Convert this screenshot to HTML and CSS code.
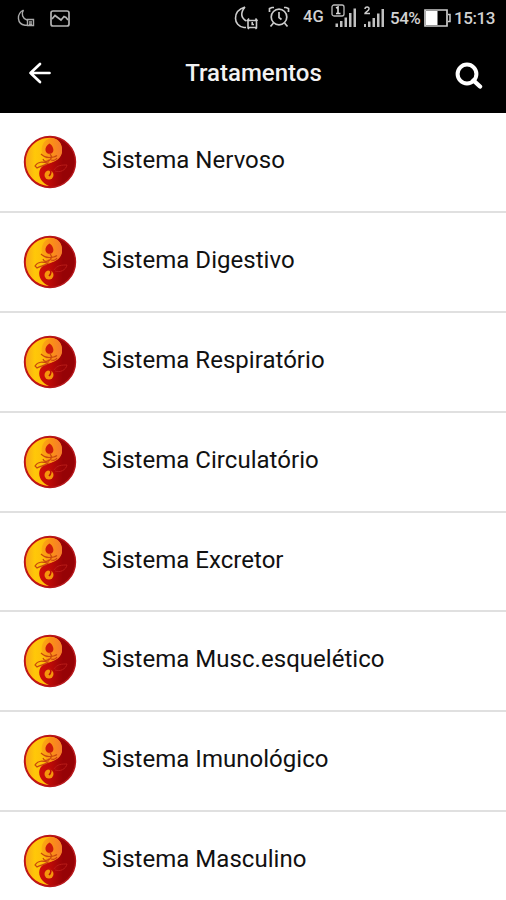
FILE: index.html
```html
<!DOCTYPE html>
<html lang="pt">
<head>
<meta charset="utf-8">
<title>Tratamentos</title>
<link rel="stylesheet" href="styles.css">
</head>
<body>
<svg class="defs" width="0" height="0" aria-hidden="true">
  <defs>
    <linearGradient id="gold" x1="0" x2="1"><stop offset="0" stop-color="#f8a51b"/><stop offset=".25" stop-color="#ffc808"/><stop offset="1" stop-color="#fbab10"/></linearGradient>
    <linearGradient id="orange" x1="0" x2="1"><stop offset="0" stop-color="#fbab10"/><stop offset=".5" stop-color="#fa9018"/><stop offset="1" stop-color="#f67a2c"/></linearGradient>
    <linearGradient id="red" x1="0" x2="1"><stop offset=".3" stop-color="#cf0f08"/><stop offset=".5" stop-color="#bd0a08"/><stop offset=".75" stop-color="#960306"/></linearGradient>
  </defs>
  <symbol id="emblem" viewBox="0 0 54 54">
    <circle cx="27" cy="27" r="25.5" fill="url(#red)" stroke="#b8161a" stroke-width="1.400"/>
    <path d="M27 2.800C13 2.800 2.800 14 2.800 27S13 50 26 51C19 48 15 42 16.500 36c1.500-5 6-7 11-8.500C34 25.500 39 22 39 15S34 2.800 27 2.800z" fill="url(#gold)"/>
    <path d="M28 3C18 5 16 17 22 23c3 3 1 5 0 7 7-3 17-4 17-15C39 8 35 3 28 3z" fill="url(#orange)"/>
    <path d="M26.500 8.500c-3 2-4.500 4.500-4 7 .5 2.500 2.500 3.500 4.500 3.300 3-.3 4-3 3-5.800-.5-2-1.500-3-3.500-4.500z" fill="#cc1a0a"/>
    <path d="M18 19c2 2 5 3.500 8 3.500s6-.5 8-2M27 19c3 3 1 5-2 7.500M20 24c1 3 4 3 6 1M28 25c3 1 5 0 6-2M12 31c3-5 8-4 13-3-3 3-8 3-11 5z" fill="none" stroke="#c9480e" stroke-width="1.200"/>
    <path d="M31 35c3-5 8-5 13-5-1 5-7 8-12 6" fill="none" stroke="#b81c18" stroke-width="1"/>
    <circle cx="26" cy="40" r="4.500" fill="#f5960c"/>
    <path d="M26 34c3 2 2 5 0 7" fill="none" stroke="#c01508" stroke-width="1.600"/>
  </symbol>
</svg>
<div class="status">
  <svg class="s-moon" width="18" height="18" viewBox="0 0 18 18" fill="none" stroke="#aaa" stroke-width="1.400"><path d="M6.500 1C-1 5 0 15 8 16.300h2M6.500 1C4 5 5.500 9.500 10 11"/><path d="M10.500 10.500h6v6h-6zM12 13h3M12 15h3"/></svg>
  <svg class="s-pic" width="20" height="17" viewBox="0 0 20 17" fill="none" stroke="#b4b4b4" stroke-width="1.700"><rect x="1" y="1" width="18" height="15" rx="2"/><path d="M2 9l3-3.500 4 3 2 1.500 3-3.500 2 1 2 2.500"/></svg>
  <svg class="s-moon2" width="24" height="24" viewBox="0 0 24 24" fill="none" stroke="#ccc" stroke-width="1.600"><path d="M11 1C-2 5-1 20 10 21.500h2M11 1C6 7 7 12 12.500 15"/><path d="M14 14.500h8.500v7H14zM13 15l2-2.500M21.500 12.500l2 2.500M18.200 16v2.500h1.800M15 21.500l-1 1.500M21.500 21.500l1 1.500"/></svg>
  <svg class="s-alarm" width="22" height="22" viewBox="0 0 22 22" fill="none" stroke="#ccc" stroke-width="1.700"><circle cx="11" cy="11" r="7.800"/><path d="M11 6v5.500l2.500 2M1.500 6V2.500L4 1.500h2M20.500 6V2.500L18 1.500h-2M5.500 17l-3 3.500M16.500 17l3 3.500"/></svg>
  <span class="net">4G</span>
  <svg class="s-sig1" width="26" height="24" viewBox="0 0 26 24"><path d="M4.500 19.500h2.500V23H4.500zM9 17h2.500v6H9zM13.500 13.500H16V23h-2.500zM18 9h2.500v14H18zM22.500 4.500H25V23h-2.500z" fill="#c0c0c0"/><rect x="1" y="1" width="12" height="11" rx="2" fill="#000" stroke="#bbb" stroke-width="1.300"/><path d="M5 4l2-1v6M5 9.500h4.500" fill="none" stroke="#ddd" stroke-width="1.600"/></svg>
  <svg class="s-sig2" width="21" height="22" viewBox="0 0 21 22"><path d="M0 18h2v3H0zM4 15.500h2.500V21H4zM8.500 12H11v9H8.500zM13 7.500h2.500V21H13zM17.500 3H20v18h-2.500z" fill="#c0c0c0"/><path d="M1 3c0-3 4.500-2.500 4 0C5 5 1 6 1 7.500h5" fill="none" stroke="#ccc" stroke-width="1.500"/></svg>
  <span class="pct">54%</span>
  <svg class="s-bat" width="27" height="18" viewBox="0 0 27 18"><path d="M1 1h22v16H1z" fill="none" stroke="#ccc" stroke-width="1.700"/><path d="M2 2h11.500v14H2z" fill="#fff"/><path d="M24 5.500h2v7h-2" fill="none" stroke="#ccc" stroke-width="1.500"/></svg>
  <span class="time">15:13</span>
</div>
<header class="bar">
  <svg class="back" width="24" height="24" viewBox="0 0 24 24" fill="none" stroke="#fff" stroke-width="2.700" stroke-linecap="round" stroke-linejoin="round"><path d="M21.500 12H2.500M12 3L2.500 12l9.500 9"/></svg>
  <h1 class="title">Tratamentos</h1>
  <svg class="search" width="28" height="28" viewBox="0 0 28 28" fill="none" stroke="#fff"><circle cx="12" cy="12" r="9.400" stroke-width="4"/><path d="M18.500 18.500l6.500 6" stroke-width="4.400" stroke-linecap="round"/></svg>
</header>
<ul class="list">
  <li class="row"><svg class="emblem"><use href="#emblem"/></svg><span class="label">Sistema Nervoso</span></li>
  <li class="row"><svg class="emblem"><use href="#emblem"/></svg><span class="label">Sistema Digestivo</span></li>
  <li class="row"><svg class="emblem"><use href="#emblem"/></svg><span class="label">Sistema Respiratório</span></li>
  <li class="row"><svg class="emblem"><use href="#emblem"/></svg><span class="label">Sistema Circulatório</span></li>
  <li class="row"><svg class="emblem"><use href="#emblem"/></svg><span class="label">Sistema Excretor</span></li>
  <li class="row"><svg class="emblem"><use href="#emblem"/></svg><span class="label">Sistema Musc.esquelético</span></li>
  <li class="row"><svg class="emblem"><use href="#emblem"/></svg><span class="label">Sistema Imunológico</span></li>
  <li class="row"><svg class="emblem"><use href="#emblem"/></svg><span class="label">Sistema Masculino</span></li>
</ul>
</body>
</html>
```
FILE: styles.css
```css
* { box-sizing: border-box; }
body {
  margin: 0;
  height: 900px;
  overflow: hidden;
  background: #fff;
  font-family: Roboto, "Liberation Sans", sans-serif;
  color: #111;
}
svg { display: block; flex: none; }
.defs { position: absolute; }
.status {
  display: flex;
  align-items: center;
  height: 36px;
  padding-left: 17px;
  background: #000;
  color: #d2d2d2;
  font-weight: 500;
  line-height: 20px;
  white-space: nowrap;
}
.s-pic { margin-left: 15px; }
.s-moon2 { margin-left: 164px; }
.s-alarm { margin-left: 10px; margin-top: -2px; }
.net { width: 22px; margin-left: 13px; font-size: 16.5px; margin-top: -2px; }
.s-sig1 { margin: -4px 0 0 6px; }
.s-sig2 { margin: -2px 0 0 7px; }
.pct { width: 33px; margin-left: 5px; font-size: 17px; letter-spacing: -0.5px; }
.s-bat { margin-left: 1px; }
.time { margin-left: 3px; font-size: 17px; letter-spacing: -0.4px; }
.bar {
  display: flex;
  align-items: center;
  justify-content: space-between;
  height: 77px;
  padding: 0 23px 0 28px;
  background: #000;
  color: #f2f2f2;
}
.back { margin-top: -3px; }
.title { margin: -4px 0 0; font-size: 24px; font-weight: 500; line-height: 28px; }
.search { margin-top: 2px; }
.list { margin: 0; padding: 0; list-style: none; }
.row {
  display: flex;
  align-items: center;
  height: 99.9px;
  padding-left: 23px;
  border-bottom: 2px solid #e0e0e0;
}
.emblem { width: 54px; height: 54px; }
.label {
  margin: -4px 0 0 25px;
  font-size: 24px;
  line-height: 30px;
  letter-spacing: 0.03px;
  white-space: nowrap;
}
```
